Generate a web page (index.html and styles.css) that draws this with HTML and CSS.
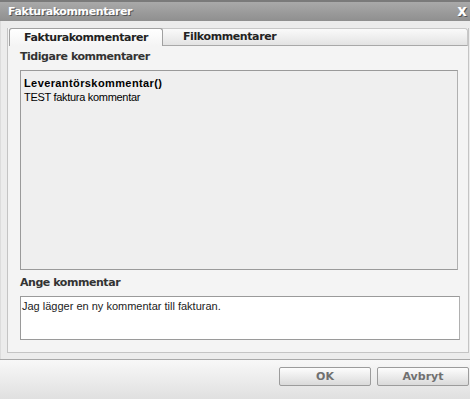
FILE: index.html
```html
<!DOCTYPE html>
<html lang="sv">
<head>
    <meta charset="UTF-8">
    <meta name="viewport" content="width=device-width, initial-scale=1.0">
    <title>Fakturakommentarer</title>
    <link rel="stylesheet" href="styles.css">
</head>
<body>
    <div class="dialog">
        <div class="title-bar">
            <span class="title">Fakturakommentarer</span>
            <span class="close">x</span>
        </div>

        <div class="dialog-body">
            <div class="panel">
                <div class="tabs">
                    <div class="tab active">Fakturakommentarer</div>
                    <div class="tab">Filkommentarer</div>
                </div>

                <div class="panel-content">
                    <h3 class="section-label">Tidigare kommentarer</h3>
                    <div class="history">
                        <div class="history-author">Leverantörskommentar()</div>
                        <div class="history-text">TEST faktura kommentar</div>
                    </div>

                    <h3 class="section-label second">Ange kommentar</h3>
                    <textarea class="comment-input">Jag lägger en ny kommentar till fakturan.</textarea>
                </div>
            </div>
        </div>

        <div class="footer">
            <button class="btn">OK</button>
            <button class="btn">Avbryt</button>
        </div>
    </div>
</body>
</html>
```

FILE: styles.css
```css
body {
    margin: 0;
    background-color: #ffffff;
    font-family: "DejaVu Sans", Verdana, sans-serif;
    color: #333;
}

.dialog {
    width: 470px;
    height: 399px;
    background-color: #ececec;
    display: flex;
    flex-direction: column;
}

/* Title bar */
.title-bar {
    height: 21px;
    box-sizing: border-box;
    border-top: 2px solid #7a7a7a;
    background: linear-gradient(#a9a9a9, #8f8f8f);
    display: flex;
    align-items: center;
    justify-content: space-between;
    padding: 0 3px 1px 8px;
}

.title {
    color: #ffffff;
    font-size: 11px;
    font-weight: bold;
    letter-spacing: -0.4px;
    text-shadow: 1px 1px 0 #555;
}

.close {
    color: #ffffff;
    font-size: 15px;
    font-weight: bold;
    text-shadow: 1px 1px 0 #555;
    line-height: 1;
    margin-top: 1px;
}

/* Body with tab panel */
.dialog-body {
    padding: 7px 1px 6px 6px;
    border-left: 1px solid #dcdcdc;
}

.panel {
    border: 1px solid #c4c4c4;
    border-top: none;
    background-color: #f4f4f4;
    height: 325px;
    box-sizing: border-box;
}

.tabs {
    display: flex;
    height: 18px;
    box-sizing: border-box;
    margin-left: 1px;
    border: 1px solid #c8c8c8;
    border-bottom: 1px solid #a8a8a8;
    border-radius: 3px 3px 0 0;
    background: linear-gradient(#fafafa, #e3e3e3);
}

.tab {
    font-size: 11px;
    font-weight: bold;
    letter-spacing: -0.4px;
    color: #222;
    line-height: 16px;
    padding: 0 15px 0 20px;
}

.tab.active {
    width: 154px;
    box-sizing: border-box;
    padding-left: 14px;
    margin: -1px 0 -1px -1px;
    height: 18px;
    line-height: 17px;
    border: 1px solid #a0a0a0;
    border-bottom: none;
    border-radius: 3px 3px 0 0;
    background: linear-gradient(#ffffff, #f4f4f4);
}

.panel-content {
    padding: 0 10px 0 12px;
}

.section-label {
    margin: 0;
    font-size: 11px;
    font-weight: bold;
    letter-spacing: -0.45px;
    color: #333;
    line-height: 14px;
    padding: 4px 0 0 0;
}

.section-label.second {
    padding-top: 6px;
}

.history {
    margin-top: 6px;
    height: 200px;
    box-sizing: border-box;
    border: 1px solid #9a9a9a;
    border-right-color: #b0b0b0;
    background-color: #efefef;
    padding: 5px 3px;
    font-family: "Liberation Sans", Arial, sans-serif;
    font-size: 11px;
    color: #000;
    line-height: 14px;
}

.history-author {
    font-weight: bold;
    letter-spacing: 0.4px;
}

.history-text {
    letter-spacing: -0.3px;
}

.comment-input {
    display: block;
    margin-top: 6px;
    width: 440px;
    height: 44px;
    box-sizing: border-box;
    border: 1px solid #9a9a9a;
    border-right-color: #b0b0b0;
    background-color: #ffffff;
    padding: 3px 1px;
    resize: none;
    font-family: "Liberation Sans", Tahoma, sans-serif;
    font-size: 11px;
    color: #222;
}

/* Footer with buttons */
.footer {
    flex: 1;
    border-top: 1px solid #a8a8a8;
    background: linear-gradient(#f8f8f8, #e0e0e0);
    display: flex;
    justify-content: flex-end;
    align-items: flex-start;
    gap: 6px;
    padding: 7px 1px 0 0;
}

.btn {
    width: 92px;
    height: 19px;
    border: 1px solid #9c9c9c;
    border-radius: 2px;
    background: linear-gradient(#fdfdfd, #dadada);
    font-family: "DejaVu Sans", Verdana, sans-serif;
    font-size: 11px;
    font-weight: bold;
    color: #707070;
    padding: 0;
    cursor: pointer;
}
```
